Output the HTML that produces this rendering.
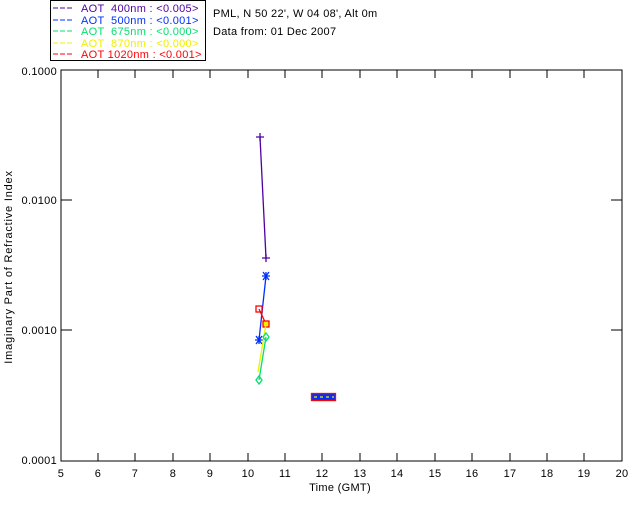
<!DOCTYPE html>
<html><head><style>
body{margin:0;background:#fff;width:640px;height:512px;overflow:hidden}
svg{display:block}
text{font-family:"Liberation Sans",sans-serif;font-size:11px;letter-spacing:0.3px}
</style></head><body>
<svg width="640" height="512" viewBox="0 0 640 512" xmlns="http://www.w3.org/2000/svg" shape-rendering="crispEdges">
<rect x="50.5" y="0.5" width="155" height="60" fill="none" stroke="#000"/>
<g>
<line x1="53" y1="8" x2="73" y2="8" stroke="#5000a0" stroke-dasharray="5,2"/><text x="81" y="12" fill="#5000a0" xml:space="preserve">AOT  400nm : &lt;0.005&gt;</text>
<line x1="53" y1="20" x2="73" y2="20" stroke="#0030ff" stroke-dasharray="5,2"/><text x="81" y="24" fill="#0030ff" xml:space="preserve">AOT  500nm : &lt;0.001&gt;</text>
<line x1="53" y1="31" x2="73" y2="31" stroke="#00e070" stroke-dasharray="5,2"/><text x="81" y="35" fill="#00e070" xml:space="preserve">AOT  675nm : &lt;0.000&gt;</text>
<line x1="53" y1="43" x2="73" y2="43" stroke="#f0f000" stroke-dasharray="5,2"/><text x="81" y="47" fill="#f0f000" xml:space="preserve">AOT  870nm : &lt;0.000&gt;</text>
<line x1="53" y1="54" x2="73" y2="54" stroke="#ff0000" stroke-dasharray="5,2"/><text x="81" y="58" fill="#ff0000" xml:space="preserve">AOT 1020nm : &lt;0.001&gt;</text>
</g>
<text x="213" y="17">PML, N 50 22', W 04 08', Alt 0m</text>
<text x="213" y="35">Data from: 01 Dec 2007</text>
<rect x="61" y="70" width="561" height="391" fill="none" stroke="#000"/>
<g stroke="#000">
<path d="M98 461v-8M135 461v-8M173 461v-8M210 461v-8M248 461v-8M285 461v-8M322 461v-8M360 461v-8M397 461v-8M435 461v-8M472 461v-8M510 461v-8M547 461v-8M584 461v-8
M98 70v8M135 70v8M173 70v8M210 70v8M248 70v8M285 70v8M322 70v8M360 70v8M397 70v8M435 70v8M472 70v8M510 70v8M547 70v8M584 70v8
M61 200h11M61 330h11M622 200h-11M622 330h-11"/>
</g>
<g text-anchor="middle">
<text x="61" y="477">5</text><text x="98" y="477">6</text><text x="135" y="477">7</text><text x="173" y="477">8</text><text x="210" y="477">9</text><text x="248" y="477">10</text><text x="285" y="477">11</text><text x="322" y="477">12</text><text x="360" y="477">13</text><text x="397" y="477">14</text><text x="435" y="477">15</text><text x="472" y="477">16</text><text x="510" y="477">17</text><text x="547" y="477">18</text><text x="584" y="477">19</text><text x="622" y="477">20</text>
<text x="340" y="491">Time (GMT)</text>
</g>
<g text-anchor="end">
<text x="57" y="75">0.1000</text><text x="57" y="204">0.0100</text><text x="57" y="334">0.0010</text><text x="57" y="464">0.0001</text>
</g>
<text transform="translate(12,267) rotate(-90)" text-anchor="middle" style="letter-spacing:0.8px">Imaginary Part of Refractive Index</text>
<g fill="none" stroke-width="1.3" shape-rendering="auto">
<path d="M260 137L266 258" stroke="#5000a0"/>
<path d="M256 137h8M260 133v8M262 258h8M266 254v8" stroke="#5000a0"/>
<path d="M266 276L259 340" stroke="#0030ff"/>
<path d="M262 276h8M266 272v8M263 272l6 8M269 272l-6 8M255 340h8M259 336v8M256 336l6 8M262 336l-6 8" stroke="#0030ff"/>
<path d="M259 309L266 324" stroke="#ff0000"/>
<rect x="256" y="306" width="6" height="6" stroke="#ff0000"/>
<rect x="263" y="321" width="6" height="6" stroke="#ff0000" fill="#f0f000"/>
<path d="M266 324L258 372" stroke="#f0f000"/>
<path d="M266 337L259 380" stroke="#00e070"/>
<path d="M266 333l3 4-3 4-3-4zM259 376l3 4-3 4-3-4z" stroke="#00e070"/>
<rect x="311.5" y="393.5" width="24" height="7" stroke="#ff0000" fill="#0030ff"/>
<path d="M314 397h3M320 397h3M326 397h3M332 397h2" stroke="#f0f000"/>
</g>
</svg>
</body></html>
